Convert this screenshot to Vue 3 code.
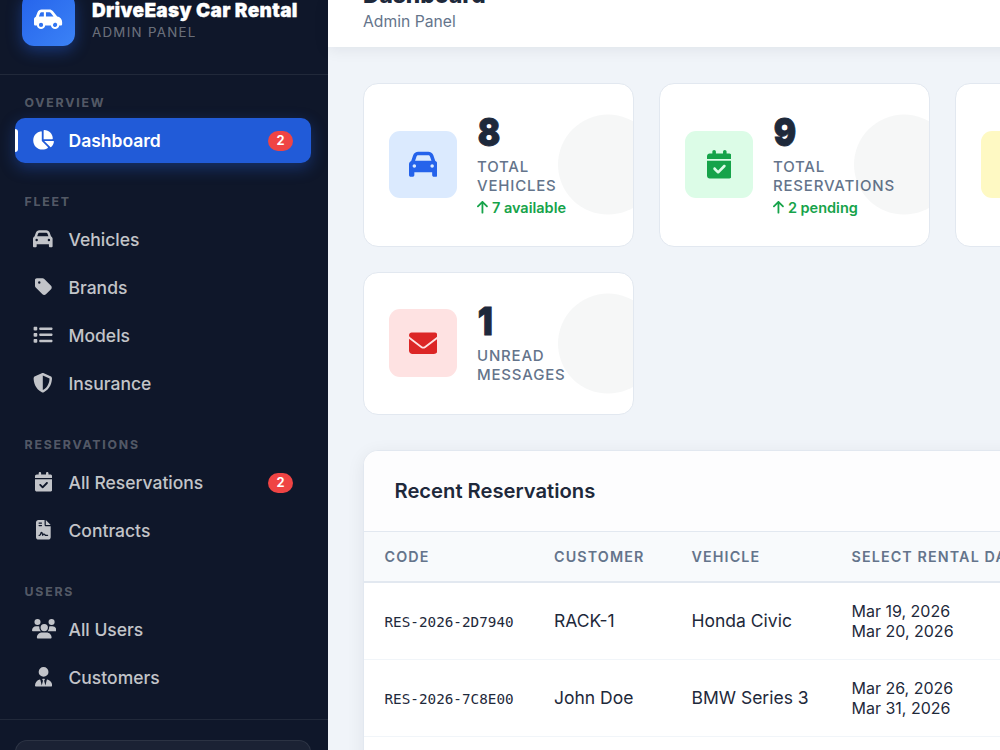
<template>
  <div class="layout">
    <aside class="sidebar">
      <div class="brand">
        <div class="brand-icon">
          <svg :viewBox="icons.carSide.box"><path :d="icons.carSide.d" /></svg>
        </div>
        <div>
          <div class="brand-name">DriveEasy Car Rental</div>
          <div class="brand-sub">Admin Panel</div>
        </div>
      </div>

      <nav class="nav">
        <section v-for="section in sections" :key="section.title" class="nav-section">
          <h2 class="nav-title">{{ section.title }}</h2>
          <a
            v-for="item in section.items"
            :key="item.label"
            class="nav-item"
            :class="{ active: item.label === current }"
            @click="current = item.label"
          >
            <span class="nav-icon">
              <svg :viewBox="icons[item.icon].box"><path :d="icons[item.icon].d" /></svg>
            </span>
            <span class="nav-label">{{ item.label }}</span>
            <span v-if="item.badge" class="badge">{{ item.badge }}</span>
          </a>
        </section>
      </nav>

      <div class="sidebar-footer">
        <div class="user-card"></div>
      </div>
    </aside>

    <main class="main">
      <header class="topbar">
        <h1>Dashboard</h1>
        <p>Admin Panel</p>
      </header>

      <div class="content">
        <div class="stats">
          <div v-for="stat in stats" :key="stat.color" class="stat-card">
            <div class="stat-icon" :class="stat.color">
              <svg v-if="stat.icon" :viewBox="icons[stat.icon].box"><path :d="icons[stat.icon].d" /></svg>
            </div>
            <div v-if="stat.label" class="stat-info">
              <div class="stat-value">{{ stat.value }}</div>
              <div class="stat-label">{{ stat.label }}</div>
              <div v-if="stat.change" class="stat-change">
                <svg :viewBox="icons.arrowUp.box"><path :d="icons.arrowUp.d" /></svg>
                <span>{{ stat.change }}</span>
              </div>
            </div>
          </div>
        </div>

        <div class="panel">
          <div class="panel-header">
            <h3>Recent Reservations</h3>
          </div>
          <table>
            <colgroup>
              <col class="col-code" />
              <col class="col-customer" />
              <col class="col-vehicle" />
              <col />
            </colgroup>
            <thead>
              <tr>
                <th>Code</th>
                <th>Customer</th>
                <th>Vehicle</th>
                <th>Select Rental Dates</th>
              </tr>
            </thead>
            <tbody>
              <tr v-for="r in reservations" :key="r.code">
                <td><code>{{ r.code }}</code></td>
                <td>{{ r.customer }}</td>
                <td>{{ r.vehicle }}</td>
                <td class="dates">{{ r.from }}<br />{{ r.to }}</td>
              </tr>
            </tbody>
          </table>
        </div>
      </div>
    </main>
  </div>
</template>

<script setup>
import { ref } from 'vue'

const current = ref('Dashboard')

const icons = {
  carSide: {
    box: '0 0 640 512',
    d: 'M171.3 96H224v96H111.3l30.4-75.9C146.5 104 158.2 96 171.3 96zM272 192V96h81.2c9.7 0 18.9 4.4 25 12l67 84H272zm256.2 1L428.2 68c-18.2-22.8-45.8-36-75-36H171.3c-39.3 0-74.6 23.9-89.1 60.3L40.6 196.4C16.8 205.8 0 228.9 0 256V368c0 17.7 14.3 32 32 32H65.3c7.6 45.4 47.1 80 94.7 80s87.1-34.6 94.7-80H385.3c7.6 45.4 47.1 80 94.7 80s87.1-34.6 94.7-80H608c17.7 0 32-14.3 32-32V320c0-65.2-48.8-119-111.8-127zM434.7 368a48 48 0 1 1 90.5 32 48 48 0 1 1 -90.5-32zM160 336a48 48 0 1 1 0 96 48 48 0 1 1 0-96z'
  },
  chartPie: {
    box: '0 0 576 512',
    d: 'M304 240V16.6c0-9 7-16.6 16-16.6C443.7 0 544 100.3 544 224c0 9-7.6 16-16.6 16H304zM32 272C32 150.7 122.1 50.3 239 34.3c9.2-1.3 17 6.1 17 15.4V288L412.5 444.5c6.7 6.7 6.2 17.7-1.5 23.1C371.8 495.6 323.8 512 272 512C139.5 512 32 404.6 32 272zm526.4 16c9.3 0 16.6 7.8 15.4 17c-7.7 55.9-34.6 105.6-73.9 142.3c-6 5.6-15.4 5.2-21.2-.7L320 288H558.4z'
  },
  car: {
    box: '0 0 512 512',
    d: 'M135.2 117.4L109.1 192H402.9l-26.1-74.6C372.3 104.6 360.2 96 346.6 96H165.4c-13.6 0-25.7 8.6-30.2 21.4zM39.6 196.8L74.8 96.3C88.3 57.8 124.6 32 165.4 32H346.6c40.8 0 77.1 25.8 90.6 64.3l35.2 100.5c23.2 9.6 39.6 32.5 39.6 59.2V400v48c0 17.7-14.3 32-32 32H448c-17.7 0-32-14.3-32-32V400H96v48c0 17.7-14.3 32-32 32H32c-17.7 0-32-14.3-32-32V400 256c0-26.7 16.4-49.6 39.6-59.2zM128 288a32 32 0 1 0 -64 0 32 32 0 1 0 64 0zm288 32a32 32 0 1 0 0-64 32 32 0 1 0 0 64z'
  },
  tag: {
    box: '0 0 448 512',
    d: 'M0 80V229.5c0 17 6.7 33.3 18.7 45.3l176 176c25 25 65.5 25 90.5 0L418.7 317.3c25-25 25-65.5 0-90.5l-176-176c-12-12-28.3-18.7-45.3-18.7H48C21.5 32 0 53.5 0 80zm112 32a32 32 0 1 1 0 64 32 32 0 1 1 0-64z'
  },
  list: {
    box: '0 0 512 512',
    d: 'M40 48C26.7 48 16 58.7 16 72v48c0 13.3 10.7 24 24 24H88c13.3 0 24-10.7 24-24V72c0-13.3-10.7-24-24-24H40zM192 64c-17.7 0-32 14.3-32 32s14.3 32 32 32H480c17.7 0 32-14.3 32-32s-14.3-32-32-32H192zm0 160c-17.7 0-32 14.3-32 32s14.3 32 32 32H480c17.7 0 32-14.3 32-32s-14.3-32-32-32H192zm0 160c-17.7 0-32 14.3-32 32s14.3 32 32 32H480c17.7 0 32-14.3 32-32s-14.3-32-32-32H192zM16 232v48c0 13.3 10.7 24 24 24H88c13.3 0 24-10.7 24-24V232c0-13.3-10.7-24-24-24H40c-13.3 0-24 10.7-24 24zM40 368c-13.3 0-24 10.7-24 24v48c0 13.3 10.7 24 24 24H88c13.3 0 24-10.7 24-24V392c0-13.3-10.7-24-24-24H40z'
  },
  shield: {
    box: '0 0 512 512',
    d: 'M256 0c4.6 0 9.2 1 13.4 2.9L457.7 82.8c22 9.3 38.4 31 38.3 57.2c-.5 99.2-41.3 280.7-213.6 363.2c-16.7 8-36.1 8-52.8 0C57.3 420.7 16.5 239.2 16 140c-.1-26.2 16.3-47.9 38.3-57.2L242.7 2.9C246.8 1 251.4 0 256 0zm0 66.8V444.8C394 378 431.1 230.1 432 141.4L256 66.8l0 0z'
  },
  calendar: {
    box: '0 0 448 512',
    d: 'M128 0c17.7 0 32 14.3 32 32V64H288V32c0-17.7 14.3-32 32-32s32 14.3 32 32V64h48c26.5 0 48 21.5 48 48v48H0V112C0 85.5 21.5 64 48 64H96V32c0-17.7 14.3-32 32-32zM0 192H448V464c0 26.5-21.5 48-48 48H48c-26.5 0-48-21.5-48-48V192zM329 305c9.4-9.4 9.4-24.6 0-33.9s-24.6-9.4-33.9 0l-95 95-47-47c-9.4-9.4-24.6-9.4-33.9 0s-9.4 24.6 0 33.9l64 64c9.4 9.4 24.6 9.4 33.9 0L329 305z'
  },
  contract: {
    box: '0 0 384 512',
    d: 'M64 0C28.7 0 0 28.7 0 64V448c0 35.3 28.7 64 64 64H320c35.3 0 64-28.7 64-64V160H256c-17.7 0-32-14.3-32-32V0H64zM256 0V128H384L256 0zM80 64h64c8.8 0 16 7.2 16 16s-7.2 16-16 16H80c-8.8 0-16-7.2-16-16s7.2-16 16-16zm0 64h64c8.8 0 16 7.2 16 16s-7.2 16-16 16H80c-8.8 0-16-7.2-16-16s7.2-16 16-16zm54.2 253.8c-6.1 20.3-24.8 34.2-46 34.2H80c-8.8 0-16-7.2-16-16s7.2-16 16-16h8.2c7.1 0 13.3-4.6 15.3-11.4l14.9-49.5c3.4-11.3 13.8-19.1 25.6-19.1s22.2 7.7 25.6 19.1l11.6 38.6c7.4-6.2 16.8-9.7 26.8-9.7c15.9 0 30.4 9 37.5 23.2l4.4 8.8H304c8.8 0 16 7.2 16 16s-7.2 16-16 16H240c-6.1 0-11.6-3.4-14.3-8.8l-8.8-17.7c-1.7-3.4-5.1-5.5-8.8-5.5s-7.2 2.1-8.8 5.5l-8.8 17.7c-2.9 5.9-9.2 9.4-15.7 8.8s-12.1-5.1-13.9-11.3L144 349l-9.8 32.8z'
  },
  users: {
    box: '0 0 640 512',
    d: 'M144 0a80 80 0 1 1 0 160A80 80 0 1 1 144 0zM512 0a80 80 0 1 1 0 160A80 80 0 1 1 512 0zM0 298.7C0 239.8 47.8 192 106.7 192h42.7c15.9 0 31 3.5 44.6 9.7c-1.3 7.2-1.9 14.7-1.9 22.3c0 38.2 16.8 72.5 43.3 96c-.2 0-.4 0-.7 0H21.3C9.6 320 0 310.4 0 298.7zM405.3 320c-.2 0-.4 0-.7 0c26.6-23.5 43.3-57.8 43.3-96c0-7.6-.7-15-1.9-22.3c13.6-6.3 28.7-9.7 44.6-9.7h42.7C592.2 192 640 239.8 640 298.7c0 11.8-9.6 21.3-21.3 21.3H405.3zM224 224a96 96 0 1 1 192 0 96 96 0 1 1 -192 0zM128 485.3C128 411.7 187.7 352 261.3 352H378.7C452.3 352 512 411.7 512 485.3c0 14.7-11.9 26.7-26.7 26.7H154.7c-14.7 0-26.7-11.9-26.7-26.7z'
  },
  userTie: {
    box: '0 0 448 512',
    d: 'M96 128a128 128 0 1 0 256 0A128 128 0 1 0 96 128zm94.5 200.2l18.6 31L175.8 483.1l-36-146.9c-2-8.1-9.8-13.4-17.9-11.3C51.9 342.4 0 405.8 0 481.3c0 17 13.8 30.7 30.7 30.7H162.5c0 0 0 0 .1 0H168 280h5.5c0 0 0 0 .1 0H417.3c17 0 30.7-13.8 30.7-30.7c0-75.5-51.9-138.9-121.9-156.4c-8.1-2-15.9 3.3-17.9 11.3l-36 146.9L238.9 359.2l18.6-31c6.4-10.7-1.3-24.2-13.7-24.2H224 204.3c-12.4 0-20.1 13.6-13.7 24.2z'
  },
  envelope: {
    box: '0 0 512 512',
    d: 'M48 64C21.5 64 0 85.5 0 112c0 15.1 7.1 29.3 19.2 38.4L236.8 313.6c11.4 8.5 27 8.5 38.4 0L492.8 150.4c12.1-9.1 19.2-23.3 19.2-38.4c0-26.5-21.5-48-48-48H48zM0 176V384c0 35.3 28.7 64 64 64H448c35.3 0 64-28.7 64-64V176L294.4 339.2c-22.8 17.1-54 17.1-76.8 0L0 176z'
  },
  arrowUp: {
    box: '0 0 384 512',
    d: 'M214.6 41.4c-12.5-12.5-32.8-12.5-45.3 0l-160 160c-12.5 12.5-12.5 32.8 0 45.3s32.8 12.5 45.3 0L160 141.2V448c0 17.7 14.3 32 32 32s32-14.3 32-32V141.2L329.4 246.6c12.5 12.5 32.8 12.5 45.3 0s12.5-32.8 0-45.3l-160-160z'
  }
}

const sections = [
  {
    title: 'Overview',
    items: [{ label: 'Dashboard', icon: 'chartPie', badge: 2 }]
  },
  {
    title: 'Fleet',
    items: [
      { label: 'Vehicles', icon: 'car' },
      { label: 'Brands', icon: 'tag' },
      { label: 'Models', icon: 'list' },
      { label: 'Insurance', icon: 'shield' }
    ]
  },
  {
    title: 'Reservations',
    items: [
      { label: 'All Reservations', icon: 'calendar', badge: 2 },
      { label: 'Contracts', icon: 'contract' }
    ]
  },
  {
    title: 'Users',
    items: [
      { label: 'All Users', icon: 'users' },
      { label: 'Customers', icon: 'userTie' }
    ]
  }
]

const stats = [
  { value: 8, label: 'Total Vehicles', change: '7 available', icon: 'car', color: 'blue' },
  { value: 9, label: 'Total Reservations', change: '2 pending', icon: 'calendar', color: 'green' },
  { color: 'yellow' },
  { value: 1, label: 'Unread Messages', icon: 'envelope', color: 'red' }
]

const reservations = [
  { code: 'RES-2026-2D7940', customer: 'RACK-1', vehicle: 'Honda Civic', from: 'Mar 19, 2026', to: 'Mar 20, 2026' },
  { code: 'RES-2026-7C8E00', customer: 'John Doe', vehicle: 'BMW Series 3', from: 'Mar 26, 2026', to: 'Mar 31, 2026' }
]
</script>

<style>
body {
  overflow: hidden;
}
</style>

<style scoped>
* {
  box-sizing: border-box;
  margin: 0;
  padding: 0;
}

.layout {
  display: flex;
  width: 1000px;
  height: 750px;
  overflow: hidden;
  background: #f0f4f9;
  color: #1e293b;
  font-family: Inter, sans-serif;
}

svg {
  display: block;
  flex: none;
  height: 1em;
  fill: currentColor;
}

/* Sidebar */
.sidebar {
  display: flex;
  flex-direction: column;
  flex: none;
  width: 328px;
  background: #0f172a;
}

.brand {
  display: flex;
  align-items: flex-end;
  flex: none;
  gap: 17px;
  height: 75px;
  padding: 0 22px 28px;
  border-bottom: 1px solid rgba(255, 255, 255, 0.08);
  color: #fff;
}

.brand-icon {
  display: flex;
  align-items: center;
  justify-content: center;
  width: 53px;
  height: 53px;
  border-radius: 12px;
  background: linear-gradient(135deg, #2563eb, #3b82f6);
  box-shadow: 0 5px 15px rgba(37, 99, 235, 0.4);
  font-size: 22.5px;
}

.brand-name {
  font-size: 19px;
  font-weight: 900;
  letter-spacing: 0.32px;
  line-height: 22px;
  white-space: nowrap;
  -webkit-text-stroke: 0.3px currentColor;
}

.brand-sub {
  margin-bottom: 4px;
  color: rgba(255, 255, 255, 0.4);
  font-size: 13.3px;
  letter-spacing: 1.3px;
  line-height: 20px;
  text-transform: uppercase;
}

.nav {
  flex: none;
  height: 644px;
  padding: 19px 17px 0 15px;
}

.nav-section {
  margin-bottom: 30px;
}

.nav-title {
  margin-bottom: 6px;
  padding-left: 9.5px;
  color: rgba(255, 255, 255, 0.3);
  font-size: 12.3px;
  font-weight: 700;
  letter-spacing: 1.8px;
  line-height: 18px;
  text-transform: uppercase;
}

.nav-item {
  position: relative;
  display: flex;
  align-items: center;
  height: 45px;
  margin-bottom: 3px;
  padding: 0 18px 0 17px;
  border-radius: 10px;
  color: rgba(255, 255, 255, 0.75);
  font-size: 17.5px;
  font-weight: 500;
  cursor: pointer;
}

.nav-item.active {
  background: #215bd8;
  box-shadow: 0 5px 15px rgba(37, 99, 235, 0.35);
  color: #fff;
  font-weight: 600;
}

.nav-item.active::before {
  content: '';
  position: absolute;
  top: 11px;
  left: 0;
  width: 3px;
  height: 23px;
  border-radius: 0 3px 3px 0;
  background: #fff;
}

.nav-icon {
  display: flex;
  justify-content: safe center;
  flex: none;
  width: 22.5px;
  margin: 0 14px 1px 0;
  font-size: 19.6px;
}

.nav-label {
  flex: 1;
}

.badge {
  padding: 0 8.5px;
  border-radius: 10px;
  background: #ef4444;
  color: #fff;
  font-size: 12.8px;
  font-weight: 700;
  line-height: 20px;
}

.sidebar-footer {
  flex: none;
  padding: 20px 17px 0 15px;
  border-top: 1px solid rgba(255, 255, 255, 0.08);
}

.user-card {
  height: 60px;
  border: 1px solid rgba(255, 255, 255, 0.08);
  border-radius: 12px;
  background: rgba(255, 255, 255, 0.05);
}

/* Main area */
.main {
  flex: none;
  width: 1180px;
}

.topbar {
  display: flex;
  flex-direction: column;
  justify-content: flex-end;
  height: 47px;
  padding: 0 35px 15px;
  background: #fff;
  box-shadow: 0 2px 15px rgba(15, 23, 42, 0.08);
}

.topbar h1 {
  font-size: 22.7px;
  font-weight: 800;
  line-height: 32px;
}

.topbar p {
  color: #64748b;
  font-size: 15.7px;
  line-height: 21px;
}

.content {
  padding: 36px 35px 0;
}

.stats {
  display: grid;
  grid-template-rows: 164px 143px;
  grid-template-columns: repeat(3, 271px);
  gap: 25px;
  margin-bottom: 35px;
}

.stat-card {
  position: relative;
  display: flex;
  align-items: center;
  gap: 20px;
  padding: 0 25px;
  overflow: hidden;
  border: 1px solid #e2e8f0;
  border-radius: 15px;
  background: #fff;
}

.stat-card::after {
  content: '';
  position: absolute;
  top: 50%;
  right: -25px;
  width: 100px;
  height: 100px;
  border-radius: 50%;
  background: rgba(30, 60, 50, 0.04);
  transform: translateY(-50.4px);
}

.stat-icon {
  display: flex;
  align-items: center;
  justify-content: center;
  flex: none;
  width: 68px;
  height: 67.5px;
  margin-bottom: 1px;
  border-radius: 11px;
  font-size: 28.5px;
}

.blue {
  background: #dbeafe;
  color: #2563eb;
}

.green {
  background: #dcfce7;
  color: #16a34a;
}

.yellow {
  background: #fef9c3;
}

.red {
  background: #fee2e2;
  color: #dc2626;
}

.stat-info {
  padding-bottom: 2px;
}

.stat-value {
  margin-bottom: 6px;
  padding-left: 1px;
  font-size: 39px;
  font-weight: 900;
  line-height: 39px;
  transform: scaleX(0.85);
  transform-origin: left;
  -webkit-text-stroke: 1px currentColor;
}

.stat-label {
  color: #64748b;
  font-size: 15px;
  font-weight: 500;
  letter-spacing: 0.8px;
  line-height: 19px;
  text-transform: uppercase;
}

.stat-change {
  display: flex;
  align-items: center;
  gap: 4px;
  margin-top: 3px;
  color: #16a34a;
  font-size: 14.5px;
  font-weight: 600;
  line-height: 19px;
}

.panel {
  min-height: 400px;
  overflow: hidden;
  border: 1px solid #e2e8f0;
  border-radius: 15px;
  background: #fff;
  box-shadow: 0 4px 18px rgba(15, 23, 42, 0.07);
}

.panel-header {
  display: flex;
  align-items: center;
  height: 81px;
  padding: 0 30.5px 2px;
  border-bottom: 1px solid #e2e8f0;
  background: #fdfdfe;
}

.panel-header h3 {
  font-size: 20.2px;
  font-weight: 600;
}

table {
  width: 100%;
  border-collapse: separate;
  border-spacing: 0;
  table-layout: fixed;
}

.col-code {
  width: 169.5px;
}

.col-customer {
  width: 137.5px;
}

.col-vehicle {
  width: 160px;
}

th {
  height: 51px;
  padding: 0 20.5px;
  border-bottom: 2px solid #e2e8f0;
  background: #f8fafc;
  color: #64748b;
  font-size: 14.3px;
  font-weight: 600;
  letter-spacing: 1.12px;
  text-align: left;
  text-transform: uppercase;
  white-space: nowrap;
}

td {
  height: 77px;
  padding: 0 20.5px 2px;
  border-bottom: 1px solid #f1f5f9;
  font-size: 17.5px;
  white-space: nowrap;
}

code {
  font-family: 'DejaVu Sans Mono', monospace;
  font-size: 14.3px;
}

td.dates {
  padding-bottom: 0;
  font-size: 16px;
  line-height: 20px;
}
</style>
